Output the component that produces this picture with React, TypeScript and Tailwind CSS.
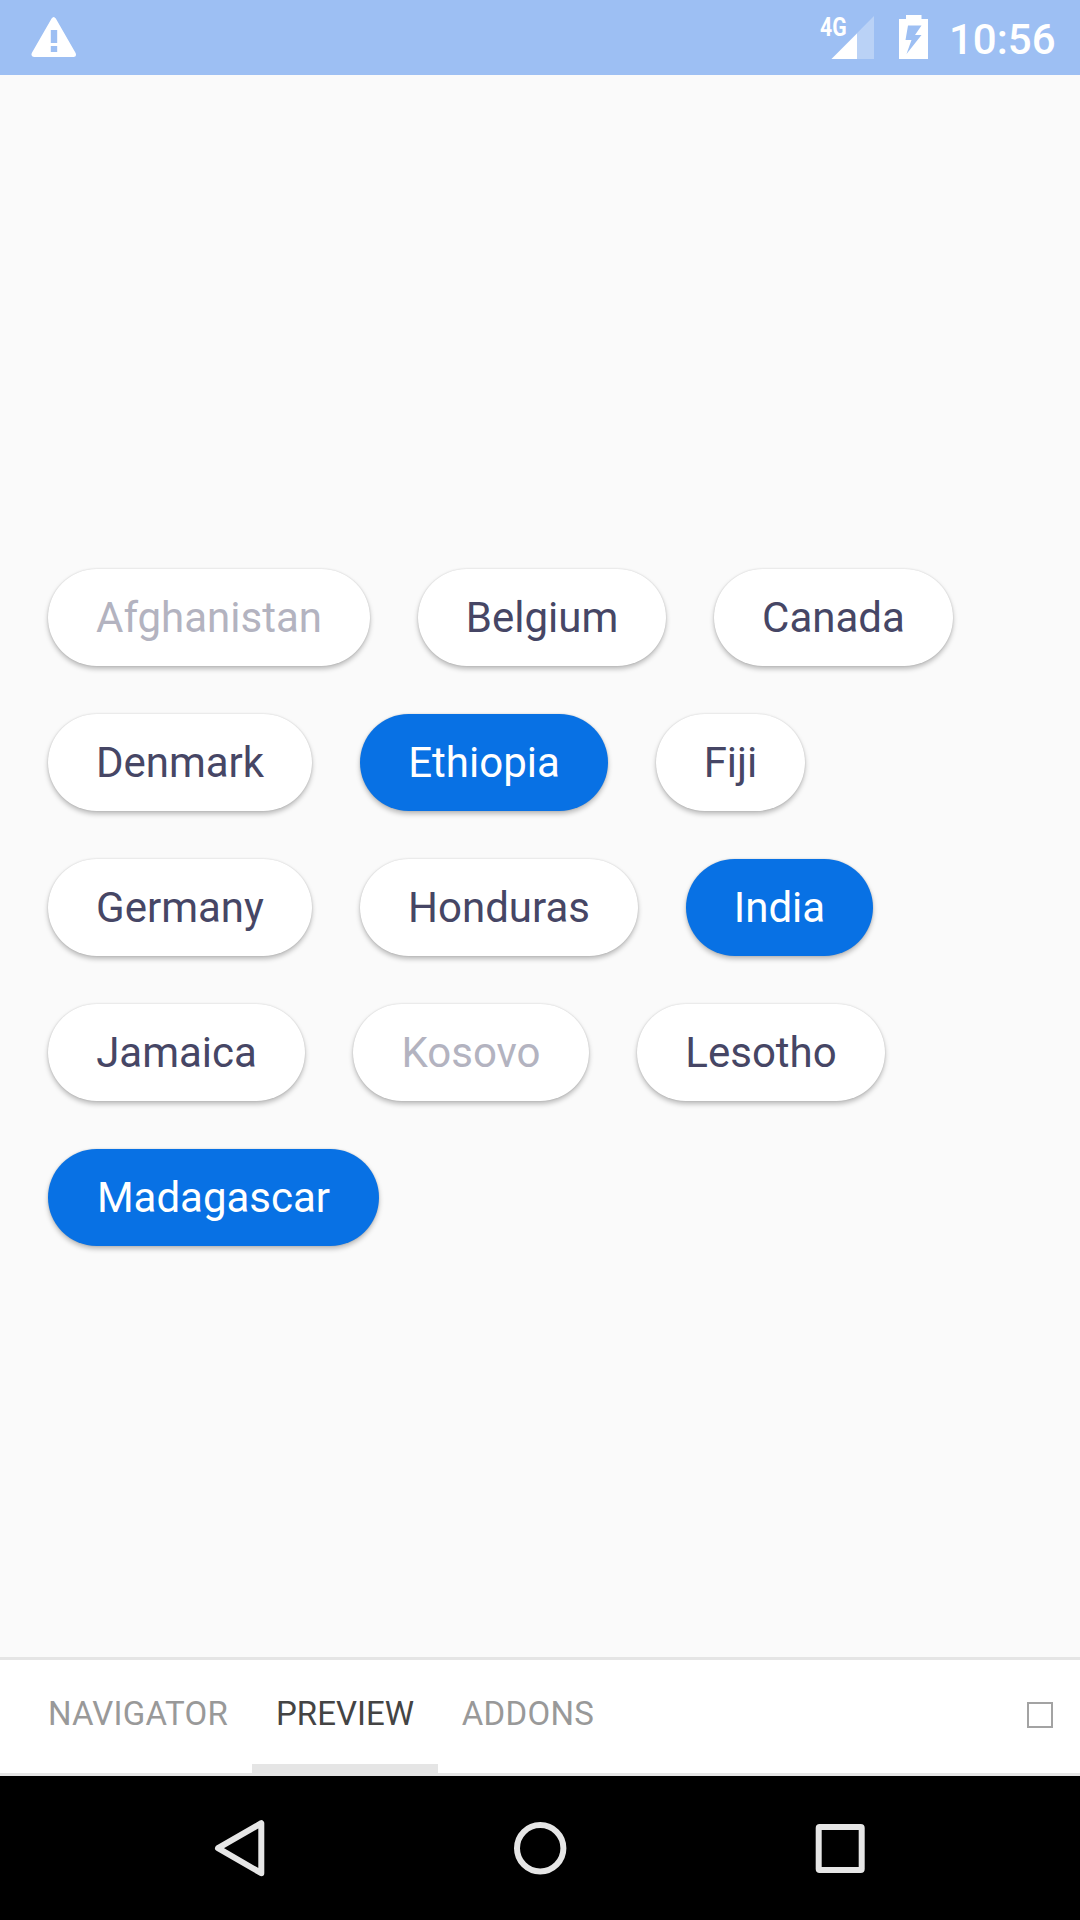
type ChipState = 'default' | 'selected' | 'disabled';

const chipStyles: Record<ChipState, string> = {
  default: 'bg-white text-[#464665]',
  selected: 'bg-[#0871e4] text-white',
  disabled: 'bg-white text-[#b3b3c0]',
};

function Chip({ label, width, state = 'default' }: { label: string; width: string; state?: ChipState }) {
  return (
    <button
      className={`flex h-[97px] items-center justify-center whitespace-nowrap rounded-full text-[42px] leading-none shadow-[0_3px_5px_rgba(0,0,0,0.25),0_0_2px_rgba(0,0,0,0.15)] ${width} ${chipStyles[state]}`}
    >
      <span>{label}</span>
    </button>
  );
}

function StatusBar() {
  return (
    <header className="flex h-[75px] shrink-0 items-start bg-[#9dbff3] text-white">
      <svg className="ml-[31px] mt-[16px] h-[42px] w-[46px]" viewBox="0 0 46 42">
        <path
          fill="currentColor"
          fillRule="evenodd"
          d="M20.6 2.5Q22.7-.5 24.8 2.5L44.6 37Q46 41 42.5 41H3Q-.5 41 .8 37ZM19.8 14V27H26.2V14ZM19.8 30V36H26.2V30Z"
        />
      </svg>
      <div className="flex-1" />
      <div className="relative h-[75px] w-[54px]">
        <svg className="absolute inset-0 h-[75px] w-[54px]" viewBox="0 0 54 75">
          <path fill="currentColor" fillOpacity="0.3" d="M54 16V59H11.5Z" />
          <path fill="currentColor" d="M37 33.5V59H11.5Z" />
        </svg>
        <span className="absolute left-0 top-[14px] origin-left scale-x-[0.83] text-[25.5px] font-bold leading-[26px]">4G</span>
      </div>
      <svg className="ml-[25px] mt-[15px] h-[44px] w-[29px]" viewBox="0 0 29 44">
        <path
          fill="currentColor"
          fillRule="evenodd"
          d="M7 0H22.5V4H29V44H0V4H7ZM9 10.5L6.5 25H12.5L7.5 39L22.5 20H16L22.5 10.5Z"
        />
      </svg>
      <span className="ml-[21px] mt-[16px] w-[131px] text-[42px] font-medium leading-[48px]">10:56</span>
    </header>
  );
}

export default function App() {
  return (
    <div className="flex h-[1920px] w-[1080px] flex-col overflow-hidden bg-[#fafafa] font-['Roboto',sans-serif]">
      <StatusBar />
      <main className="flex flex-1 flex-col gap-12 px-12 pt-[494px]">
        <div className="flex gap-12">
          <Chip label="Afghanistan" width="w-[322px]" state="disabled" />
          <Chip label="Belgium" width="w-[248px]" />
          <Chip label="Canada" width="w-[239px]" />
        </div>
        <div className="flex gap-12">
          <Chip label="Denmark" width="w-[264px]" />
          <Chip label="Ethiopia" width="w-[248px]" state="selected" />
          <Chip label="Fiji" width="w-[149px]" />
        </div>
        <div className="flex gap-12">
          <Chip label="Germany" width="w-[264px]" />
          <Chip label="Honduras" width="w-[278px]" />
          <Chip label="India" width="w-[187px]" state="selected" />
        </div>
        <div className="flex gap-12">
          <Chip label="Jamaica" width="w-[257px]" />
          <Chip label="Kosovo" width="w-[236px]" state="disabled" />
          <Chip label="Lesotho" width="w-[248px]" />
        </div>
        <div className="flex gap-12">
          <Chip label="Madagascar" width="w-[331px]" state="selected" />
        </div>
      </main>
      <nav className="flex h-[119px] shrink-0 border-y-[3px] border-[#e5e5e5] bg-white pl-6 text-[33px] leading-[39px] text-[#999999]">
        <button className="flex w-[228px] justify-center pt-[34px] tracking-[0.2px]">NAVIGATOR</button>
        <button className="flex w-[186px] justify-center border-b-[9px] border-[#e5e5e5] pt-[34px] text-[#444444]">PREVIEW</button>
        <button className="flex w-[180px] justify-center pt-[34px] tracking-[0.3px]">ADDONS</button>
        <div className="ml-[409px] mt-[42px] h-[26px] w-[26px] border-2 border-[#a3a3a3]" />
      </nav>
      <footer className="flex h-36 shrink-0 bg-black">
        <svg className="h-36 w-[1080px]" viewBox="0 0 1080 144" fill="none" stroke="#e6e6e6" strokeWidth="6" strokeLinejoin="round">
          <path d="M218 72.2L261.3 47.2V97.2Z" />
          <circle cx="540.2" cy="72.2" r="23.2" />
          <rect x="818.7" y="51" width="43" height="43" rx="1" />
        </svg>
      </footer>
    </div>
  );
}
